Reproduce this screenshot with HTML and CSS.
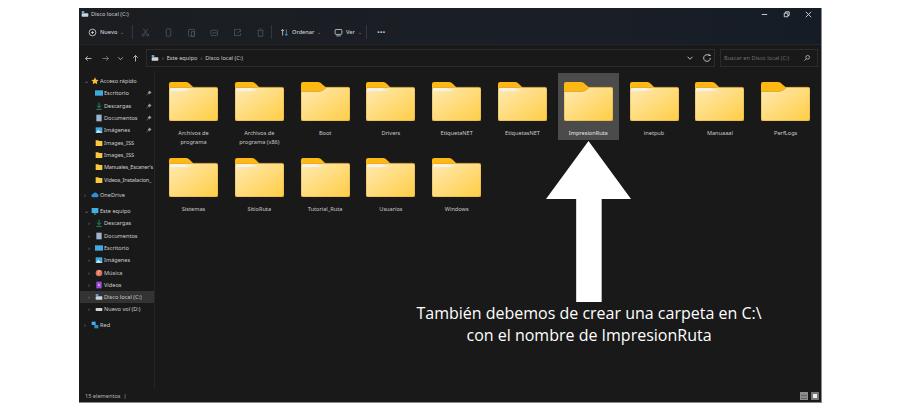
FILE: index.html
```html
<!DOCTYPE html>
<html lang="es">
<head>
    <meta charset="UTF-8">
    <title>Disco local (C:)</title>
    <link rel="stylesheet" href="styles.css">
</head>
<body>
    <svg class="defs" width="0" height="0">
        <defs>
            <linearGradient id="folderFill" x1="0" y1="0" x2="1" y2="1">
                <stop offset="0" stop-color="#ffeab2"/>
                <stop offset="1" stop-color="#ffcd45"/>
            </linearGradient>
            <symbol id="folder" viewBox="0 0 49 39">
                <path d="M2 0h15c2 0 3 1 5 3l3 3v6H0V2a2 2 0 0 1 2-2z" fill="#fdb813"/>
                <path d="M0 8c0-1 1-2 2-2h16l4-.7h25a2 2 0 0 1 2 2V37a2 2 0 0 1-2 2H2a2 2 0 0 1-2-2z" fill="url(#folderFill)" stroke="#c8962b" stroke-width=".6"/>
            </symbol>
            <symbol id="folderPlain" viewBox="0 0 49 39">
                <path d="M2 0h15c2 0 3 1 5 3l3 2.300h22a2 2 0 0 1 2 2V14H0V2a2 2 0 0 1 2-2z" fill="#fdb813"/>
                <path d="M0 9.500h17c3 0 5-1 7-3l1.500-1.200H47a2 2 0 0 1 2 2V37a2 2 0 0 1-2 2H2a2 2 0 0 1-2-2z" fill="url(#folderFill)" stroke="#c8962b" stroke-width=".6"/>
            </symbol>
            <symbol id="pin" viewBox="0 0 8 8">
                <path d="M4.500 1l2.500 2.500-1.500.5-1 1.500L2.500 3.500 4 2.500zM3 5L1 7" fill="#a5a5a5" stroke="#a5a5a5" stroke-width=".6"/>
            </symbol>
            <symbol id="navfolder" viewBox="0 0 12 12">
                <path d="M1 2h4l1 1h5v7.500H1z" fill="#fcc83f"/>
            </symbol>
            <symbol id="drive" viewBox="0 0 12 12">
                <rect x="1" y="1.500" width="4" height="3" fill="#4aa8e8"/>
                <rect x="1" y="5" width="10" height="5" rx="1" fill="#cfd3d6"/>
            </symbol>
            <symbol id="desk" viewBox="0 0 12 12">
                <rect x="0" y="2" width="12" height="8" fill="#3fa9e0"/>
            </symbol>
            <symbol id="down" viewBox="0 0 12 12">
                <path d="M6 1v7M3 5.500l3 3 3-3M2 11h8" fill="none" stroke="#2fc28c"/>
            </symbol>
            <symbol id="docs" viewBox="0 0 12 12">
                <rect x="2" y="1" width="8" height="10" fill="#9db4cc"/>
            </symbol>
            <symbol id="pics" viewBox="0 0 12 12">
                <rect x="1" y="2" width="10" height="8" fill="#3fa9e0"/>
                <path d="M1 10l4-4 3 3 1-1 2 2z" fill="#e4f3fb"/>
            </symbol>
        </defs>
    </svg>

    <div class="window">
        <div class="titlebar">
            <div class="title">
                <svg class="ico"><use href="#drive"/></svg>
                <span>Disco local (C:)</span>
            </div>
            <div class="winbtns">
                <svg viewBox="0 0 10 10"><path d="M2 5h6" stroke="#ddd"/></svg>
                <svg viewBox="0 0 10 10"><path d="M2.500 3.500h4v4h-4zM4 3.500V2h4v4H6.500" fill="none" stroke="#ddd"/></svg>
                <svg viewBox="0 0 10 10"><path d="M2 2l6 6M8 2l-6 6" stroke="#ddd"/></svg>
            </div>
        </div>

        <div class="commandbar">
            <div class="cmd cmd-new">
                <svg class="tool" viewBox="0 0 12 12"><circle cx="6" cy="6" r="4.500" fill="none" stroke="#ddd"/><path d="M6 4v4M4 6h4" stroke="#ddd"/></svg>
                <span>Nuevo</span><i class="caret">⌄</i>
            </div>
            <div class="sep"></div>
            <div class="actions">
                <svg class="tool" viewBox="0 0 12 12"><path d="M3 1l5 7M9 1L4 8" stroke="#4b5c6b" fill="none"/><circle cx="3" cy="9.500" r="1.500" fill="none" stroke="#4b5c6b"/><circle cx="9" cy="9.500" r="1.500" fill="none" stroke="#4b5c6b"/></svg>
                <svg class="tool" viewBox="0 0 12 12"><rect x="3" y="1" width="6" height="10" rx="1" fill="none" stroke="#4b5c6b"/></svg>
                <svg class="tool" viewBox="0 0 12 12"><rect x="2" y="2" width="8" height="9" rx="1" fill="none" stroke="#4b5c6b"/><rect x="6" y="5" width="4" height="6" fill="none" stroke="#4b5c6b"/></svg>
                <svg class="tool" viewBox="0 0 12 12"><rect x="1" y="3" width="9" height="7" rx="1" fill="none" stroke="#4b5c6b"/><path d="M3 6.500h6" stroke="#4b5c6b"/></svg>
                <svg class="tool" viewBox="0 0 12 12"><path d="M6 2H2v8h8V7M6 7l4-4M7 2h3v3" fill="none" stroke="#4b5c6b"/></svg>
                <svg class="tool" viewBox="0 0 12 12"><path d="M2 3h8M3 3v8h6V3M5 1h2" fill="none" stroke="#4b5c6b"/></svg>
            </div>
            <div class="sep"></div>
            <div class="cmd cmd-sort">
                <svg class="tool" viewBox="0 0 12 12"><path d="M3.500 10V2M1.500 4l2-2 2 2" fill="none" stroke="#ddd"/><path d="M8.500 2v8M6.500 8l2 2 2-2" fill="none" stroke="#4aa8e8"/></svg>
                <span>Ordenar</span><i class="caret">⌄</i>
            </div>
            <div class="cmd cmd-view">
                <svg class="tool" viewBox="0 0 12 12"><rect x="1.500" y="2" width="9" height="6.500" rx="1" fill="none" stroke="#ddd"/><path d="M3 10.500h6" stroke="#ddd"/></svg>
                <span>Ver</span><i class="caret">⌄</i>
            </div>
            <div class="sep"></div>
            <div class="more">···</div>
        </div>

        <div class="addressrow">
            <div class="navbtns">
                <svg viewBox="0 0 12 12"><path d="M10 6H2M5 3L2 6l3 3" fill="none" stroke="#ddd"/></svg>
                <svg viewBox="0 0 12 12"><path d="M2 6h8M7 3l3 3-3 3" fill="none" stroke="#8d8d8d"/></svg>
                <svg viewBox="0 0 12 12"><path d="M3 4.500l3 3 3-3" fill="none" stroke="#ddd"/></svg>
                <svg viewBox="0 0 12 12"><path d="M6 10V2M3 5l3-3 3 3" fill="none" stroke="#ddd"/></svg>
            </div>
            <div class="addressbox">
                <svg class="ico"><use href="#drive"/></svg>
                <span class="crumbsep">›</span><span>Este equipo</span><span class="crumbsep">›</span><span>Disco local (C:)</span>
                <div class="addressend">
                    <svg viewBox="0 0 12 12"><path d="M3 4.500l3 3 3-3" fill="none" stroke="#ddd"/></svg>
                    <svg viewBox="0 0 12 12"><path d="M10 6a4 4 0 1 1-1.500-3.100M8.500 1v2h2" fill="none" stroke="#ddd"/></svg>
                </div>
            </div>
            <div class="searchbox">
                <span>Buscar en Disco local (C:)</span>
                <svg viewBox="0 0 12 12"><circle cx="7" cy="5" r="2.800" fill="none" stroke="#ddd"/><path d="M5 7l-3 3" stroke="#ddd"/></svg>
            </div>
        </div>

        <div class="main">
            <nav class="sidebar">
                <div class="navgroup">
                    <div class="row"><i class="chev">⌄</i><svg class="ico" viewBox="0 0 12 12"><path d="M6 .5l1.700 3.600 3.800.5-2.800 2.600.7 3.800L6 9.100 2.600 11l.7-3.800L.5 4.600l3.800-.5z" fill="#fbc02d"/></svg><span>Acceso rápido</span></div>
                    <div class="row sub"><svg class="ico"><use href="#desk"/></svg><span>Escritorio</span><svg class="pin"><use href="#pin"/></svg></div>
                    <div class="row sub"><svg class="ico"><use href="#down"/></svg><span>Descargas</span><svg class="pin"><use href="#pin"/></svg></div>
                    <div class="row sub"><svg class="ico"><use href="#docs"/></svg><span>Documentos</span><svg class="pin"><use href="#pin"/></svg></div>
                    <div class="row sub"><svg class="ico"><use href="#pics"/></svg><span>Imágenes</span><svg class="pin"><use href="#pin"/></svg></div>
                    <div class="row sub"><svg class="ico"><use href="#navfolder"/></svg><span>Images_ISS</span></div>
                    <div class="row sub"><svg class="ico"><use href="#navfolder"/></svg><span>Images_ISS</span></div>
                    <div class="row sub long"><svg class="ico"><use href="#navfolder"/></svg><span>Manuales_Escaner's</span></div>
                    <div class="row sub long"><svg class="ico"><use href="#navfolder"/></svg><span>Videos_Instalacion_</span></div>
                </div>
                <div class="navgroup">
                    <div class="row"><i class="chev">›</i><svg class="ico" viewBox="0 0 12 12"><path d="M3 9.500a2.500 2.500 0 0 1 0-5 3.500 3.500 0 0 1 6.300-.3A2.700 2.700 0 0 1 9 9.500z" fill="#2a92dc"/></svg><span>OneDrive</span></div>
                </div>
                <div class="navgroup">
                    <div class="row"><i class="chev">⌄</i><svg class="ico" viewBox="0 0 12 12"><rect x="1" y="1.500" width="10" height="7.500" fill="#41b0e6"/><path d="M4 10.500h4" stroke="#9fd4ee"/></svg><span>Este equipo</span></div>
                    <div class="row sub"><i class="chev">›</i><svg class="ico"><use href="#down"/></svg><span>Descargas</span></div>
                    <div class="row sub"><i class="chev">›</i><svg class="ico"><use href="#docs"/></svg><span>Documentos</span></div>
                    <div class="row sub"><i class="chev">›</i><svg class="ico"><use href="#desk"/></svg><span>Escritorio</span></div>
                    <div class="row sub"><i class="chev">›</i><svg class="ico"><use href="#pics"/></svg><span>Imágenes</span></div>
                    <div class="row sub"><i class="chev">›</i><svg class="ico" viewBox="0 0 12 12"><circle cx="6" cy="6" r="5" fill="#e0705a"/><path d="M5 8.500v-5l3-.5" fill="none" stroke="#fbe3d6"/></svg><span>Música</span></div>
                    <div class="row sub"><i class="chev">›</i><svg class="ico" viewBox="0 0 12 12"><rect x="2" y="1" width="8" height="10" fill="#9a4fd8"/><path d="M5 4.500l3 1.500-3 1.500z" fill="#f1e4fb"/></svg><span>Vídeos</span></div>
                    <div class="row sub current"><i class="chev">›</i><svg class="ico"><use href="#drive"/></svg><span>Disco local (C:)</span></div>
                    <div class="row sub"><i class="chev">›</i><svg class="ico" viewBox="0 0 12 12"><rect x="1" y="4.500" width="10" height="4.500" rx="1" fill="#cfd3d6"/></svg><span>Nuevo vol (D:)</span></div>
                </div>
                <div class="navgroup">
                    <div class="row"><i class="chev">›</i><svg class="ico" viewBox="0 0 12 12"><rect x="1" y="1" width="6" height="5" fill="#41b0e6"/><rect x="5" y="6" width="6" height="5" fill="#2a8fca"/></svg><span>Red</span></div>
                </div>
            </nav>

            <section class="content">
                <div class="grid">
                    <div class="item strip"><svg class="folder"><use href="#folder"/></svg><p>Archivos de programa</p></div>
                    <div class="item strip"><svg class="folder"><use href="#folder"/></svg><p>Archivos de programa (x86)</p></div>
                    <div class="item"><svg class="folder"><use href="#folderPlain"/></svg><p>Boot</p></div>
                    <div class="item strip"><svg class="folder"><use href="#folder"/></svg><p>Drivers</p></div>
                    <div class="item strip"><svg class="folder"><use href="#folder"/></svg><p>EtiquetaNET</p></div>
                    <div class="item strip"><svg class="folder"><use href="#folder"/></svg><p>EtiquetasNET</p></div>
                    <div class="item selected"><svg class="folder"><use href="#folderPlain"/></svg><p>ImpresionRuta</p></div>
                    <div class="item strip"><svg class="folder"><use href="#folder"/></svg><p>inetpub</p></div>
                    <div class="item strip"><svg class="folder"><use href="#folder"/></svg><p>Manuaaal</p></div>
                    <div class="item"><svg class="folder"><use href="#folderPlain"/></svg><p>PerfLogs</p></div>
                    <div class="item strip"><svg class="folder"><use href="#folder"/></svg><p>Sistemas</p></div>
                    <div class="item strip"><svg class="folder"><use href="#folder"/></svg><p>SitioRuta</p></div>
                    <div class="item strip"><svg class="folder"><use href="#folder"/></svg><p>Tutorial_Ruta</p></div>
                    <div class="item strip"><svg class="folder"><use href="#folder"/></svg><p>Usuarios</p></div>
                    <div class="item strip"><svg class="folder"><use href="#folder"/></svg><p>Windows</p></div>
                </div>
            </section>
        </div>

        <div class="statusbar">
            <span>15 elementos &nbsp;|</span>
            <div class="viewbtns"><b class="viewbtn"></b><b class="viewbtn on"></b></div>
        </div>
    </div>

    <div class="arrow"></div>
    <p class="caption">También debemos de crear una carpeta en C:\<br>con el nombre de ImpresionRuta</p>
</body>
</html>
```

FILE: styles.css
```css
body {
    margin: 0;
    height: 410px;
    overflow: hidden;
    background: #fff;
    font-family: "Noto Sans", "Open Sans", sans-serif;
    position: relative;
}
.defs {
    display: block;
    height: 0;
}
.window {
    margin: 8px 0 0 79px;
    width: 743px;
    height: 395px;
    background: #191919;
    color: #cdcdcd;
    font-size: 5.6px;
    display: flex;
    flex-direction: column;
    border-right: 1px solid #8a8a8a;
    border-bottom: 1px solid #8a8a8a;
    box-sizing: border-box;
}
.ico {
    width: 8px;
    height: 8px;
    flex: none;
}
.tool {
    width: 9px;
    height: 9px;
    flex: none;
}
.titlebar {
    height: 11px;
    display: flex;
    align-items: center;
    justify-content: space-between;
    padding: 1px 8px 0 2px;
    box-sizing: border-box;
    background: linear-gradient(90deg, #1b1d20, #1a1f27 60%, #161c26);
}
.title {
    display: flex;
    align-items: center;
    gap: 2px;
}
.winbtns {
    display: flex;
    gap: 13px;
}
.winbtns svg {
    width: 9px;
    height: 9px;
}
.commandbar {
    height: 26px;
    box-sizing: border-box;
    display: flex;
    align-items: center;
    padding: 1px 0 0 9px;
    font-weight: 500;
    background: linear-gradient(90deg, #1b1d20, #1a1f27 60%, #161c26);
    border-bottom: 1px solid #23262a;
}
.cmd {
    display: flex;
    align-items: center;
    gap: 3px;
}
.cmd-new {
    width: 44px;
}
.cmd-sort {
    width: 54px;
    margin-left: 8px;
}
.cmd-view {
    width: 32px;
}
.caret {
    font-style: normal;
    color: #999;
    font-size: 5px;
    line-height: 5px;
}
.sep {
    width: 1px;
    height: 14px;
    background: #34373b;
}
.actions {
    display: flex;
    gap: 14px;
    margin: 0 6px 0 8px;
}
.more {
    font-size: 10px;
    font-weight: 700;
    line-height: 10px;
    margin-left: 10px;
}
.addressrow {
    height: 26px;
    display: flex;
    align-items: center;
    padding-left: 5px;
    box-sizing: border-box;
}
.navbtns {
    display: flex;
    margin-right: 6px;
}
.navbtns svg {
    width: 9px;
    height: 9px;
}
.navbtns svg + svg {
    margin-left: 6px;
}
.navbtns svg:nth-child(2) {
    margin-left: 8px;
}
.addressbox, .searchbox {
    height: 18px;
    box-sizing: border-box;
    border: 1px solid #2c2c2c;
    display: flex;
    align-items: center;
}
.addressbox {
    width: 569px;
    padding: 0 2px 0 4px;
    gap: 2px;
}
.crumbsep {
    color: #9a9a9a;
    padding: 0 1px;
}
.addressend {
    margin-left: auto;
    display: flex;
    gap: 7px;
}
.addressend svg {
    width: 10px;
    height: 10px;
}
.searchbox {
    width: 98px;
    margin-left: 5px;
    padding: 0 6px 0 3px;
    justify-content: space-between;
    color: #6f6f6f;
}
.searchbox svg {
    width: 8px;
    height: 8px;
}
.main {
    flex: 1;
    display: flex;
    min-height: 0;
}
.sidebar {
    width: 76px;
    flex: none;
    border-right: 1px solid #252525;
    padding: 4px 0 0 1px;
    box-sizing: border-box;
    overflow: hidden;
}
.navgroup {
    margin-bottom: 3.5px;
}
.row {
    height: 12.3px;
    display: flex;
    align-items: center;
    gap: 1px;
    padding-left: 11px;
    position: relative;
    white-space: nowrap;
}
.row.sub {
    padding-left: 15px;
}
.row.long {
    letter-spacing: -0.2px;
}
.row.current {
    background: #333;
}
.chev {
    position: absolute;
    left: 4px;
    font-style: normal;
    font-size: 6px;
    line-height: 6px;
    color: #8d8d8d;
}
.row.sub .chev {
    left: 8px;
}
.pin {
    position: absolute;
    right: 2px;
    width: 6px;
    height: 6px;
}
.content {
    flex: 1;
    min-width: 0;
}
.grid {
    display: grid;
    grid-template-columns: repeat(10, 61px);
    grid-auto-rows: 67px;
    column-gap: 4.8px;
    row-gap: 9px;
    padding: 2px 0 0 8px;
}
.item {
    display: flex;
    flex-direction: column;
    align-items: center;
    text-align: center;
    padding-top: 9px;
    box-sizing: border-box;
    position: relative;
}
.item.selected {
    background: #4b4b4b;
}
.item.strip::before {
    content: "";
    position: absolute;
    left: 7px;
    top: 15px;
    width: 21px;
    height: 2.5px;
    background: linear-gradient(90deg, #f4f2ea 70%, rgba(244, 242, 234, 0.2));
    z-index: 1;
}
.folder {
    width: 49px;
    height: 39px;
    flex: none;
}
.item p {
    margin: 8px 0 0;
    max-width: 48px;
    line-height: 9px;
    color: #c8c8c8;
}
.item.selected p {
    color: #e6e6e6;
}
.statusbar {
    height: 13px;
    display: flex;
    align-items: center;
    justify-content: space-between;
    padding: 0 2px 0 6px;
    color: #b5b5b5;
}
.viewbtns {
    display: flex;
    gap: 3px;
}
.viewbtn {
    width: 8px;
    height: 8px;
    background: repeating-linear-gradient(180deg, #8a8a8a 0 2px, #666 2px 3px);
    border: 1px solid #8f8f8f;
    box-sizing: border-box;
}
.viewbtn.on {
    background: #eee;
    border: 2px solid #777;
}
.arrow {
    position: absolute;
    left: 546px;
    top: 141px;
    width: 85px;
    height: 161px;
    background: #fff;
    clip-path: polygon(50% 0, 100% 36%, 65.5% 36%, 65.5% 100%, 35.5% 100%, 35.5% 36%, 0 36%);
}
.caption {
    position: absolute;
    left: 389px;
    top: 302px;
    width: 400px;
    margin: 0;
    text-align: center;
    color: #fff;
    font-family: "Open Sans", sans-serif;
    font-size: 16px;
    line-height: 22px;
}
```
